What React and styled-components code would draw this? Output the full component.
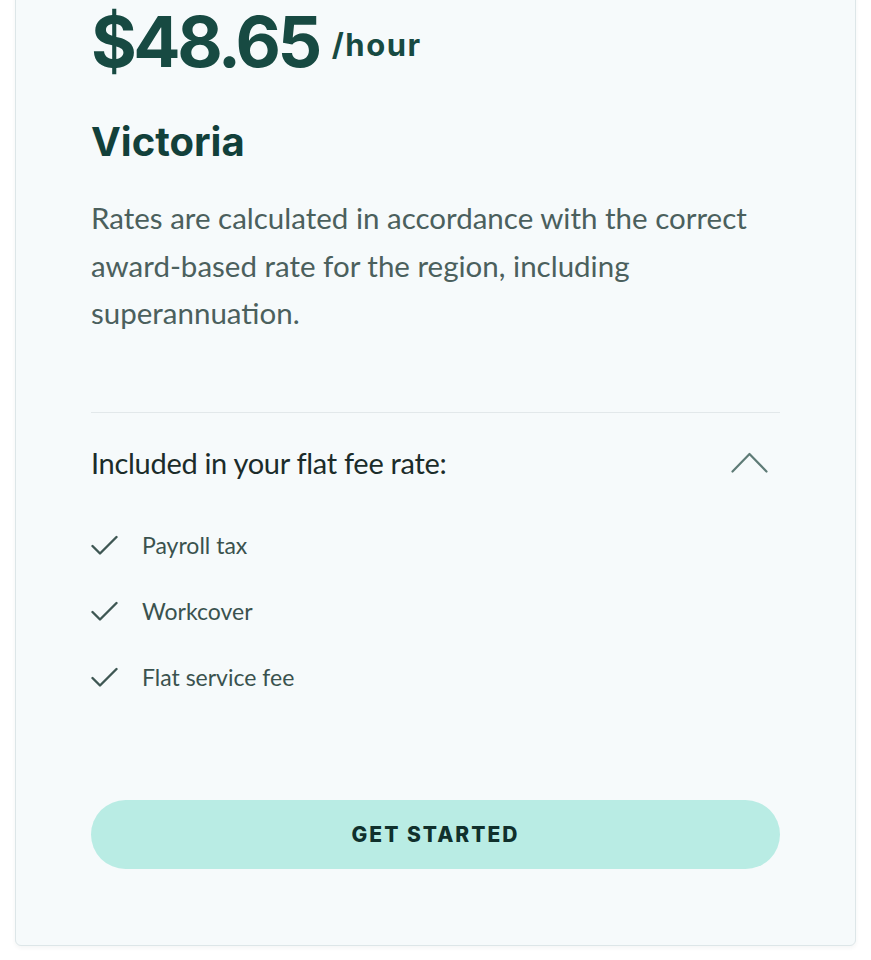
import React from "react";
import styled, { createGlobalStyle } from "styled-components";

const GlobalStyle = createGlobalStyle`
  html, body {
    margin: 0;
    padding: 0;
    background: #ffffff;
  }
  body {
    font-family: "Lato", "Noto Sans", sans-serif;
  }
`;

const Page = styled.div`
  padding: 0 15px 15px;
`;

const Card = styled.div`
  margin-top: -24px;
  background-color: #f6fafb;
  border: 1px solid #dde6e8;
  border-radius: 6px;
  box-shadow: 0 2px 4px rgba(30, 60, 60, 0.05);
  padding: 30px 75px 76px;
`;

const PriceRow = styled.div`
  display: flex;
  align-items: flex-start;
  gap: 13px;
  color: #174a42;
  font-family: "Inter", "Noto Sans", sans-serif;
  font-weight: 700;
`;

const Amount = styled.span`
  font-size: 70px;
  line-height: 1;
  letter-spacing: -3.5px;
`;

const Unit = styled.span`
  margin-top: 22px;
  font-size: 31px;
  line-height: 1;
  letter-spacing: 1.5px;
`;

const Region = styled.h2`
  margin: 42px 0 0;
  font-family: "Inter", "Noto Sans", sans-serif;
  font-weight: 700;
  font-size: 40px;
  line-height: 46px;
  color: #12403a;
`;

const Description = styled.p`
  margin: 29px 0 0;
  font-size: 29.5px;
  line-height: 47.5px;
  color: #4b605d;
`;

const Divider = styled.hr`
  margin: 75px 0 0;
  border: 0;
  border-top: 1px solid #e2e8ea;
`;

const AccordionHeader = styled.div`
  display: flex;
  justify-content: space-between;
  align-items: center;
  padding: 32px 12px 0 0;
`;

const AccordionTitle = styled.span`
  font-size: 29px;
  color: #1b2c2a;
  letter-spacing: -0.3px;
`;

const List = styled.ul`
  list-style: none;
  margin: 51px 0 0;
  padding: 0;
  display: flex;
  flex-direction: column;
  gap: 38px;
`;

const Item = styled.li`
  display: flex;
  align-items: center;
  gap: 24px;
  font-size: 23px;
  line-height: 28px;
  color: #3a524e;
`;

const Button = styled.button`
  display: block;
  width: 100%;
  margin-top: 109px;
  height: 69px;
  border: 0;
  border-radius: 35px;
  background-color: #b9ece4;
  color: #10302c;
  font-family: "Inter", "Noto Sans", sans-serif;
  font-weight: 800;
  font-size: 21px;
  letter-spacing: 2px;
  cursor: pointer;
`;

const Check = () => (
  <svg width="27" height="20" viewBox="0 0 27 20" fill="none">
    <path d="M1.5 11 L9 18.5 L25.5 2" stroke="#3e5753" strokeWidth="2.4" strokeLinecap="round" strokeLinejoin="round" />
  </svg>
);

const ChevronUp = () => (
  <svg width="37" height="22" viewBox="0 0 37 22" fill="none">
    <path d="M1.5 20.5 L18.5 3 L35.5 20.5" stroke="#5e7b76" strokeWidth="2.2" strokeLinecap="round" strokeLinejoin="round" />
  </svg>
);

const included = ["Payroll tax", "Workcover", "Flat service fee"];

export default function App() {
  return (
    <>
      <GlobalStyle />
      <Page>
        <Card>
          <PriceRow>
            <Amount>$48.65</Amount>
            <Unit>/hour</Unit>
          </PriceRow>
          <Region>Victoria</Region>
          <Description>
            Rates are calculated in accordance with the correct award-based rate for the region, including superannuation.
          </Description>
          <Divider />
          <AccordionHeader>
            <AccordionTitle>Included in your flat fee rate:</AccordionTitle>
            <ChevronUp />
          </AccordionHeader>
          <List>
            {included.map((label) => (
              <Item key={label}>
                <Check />
                {label}
              </Item>
            ))}
          </List>
          <Button>GET STARTED</Button>
        </Card>
      </Page>
    </>
  );
}
